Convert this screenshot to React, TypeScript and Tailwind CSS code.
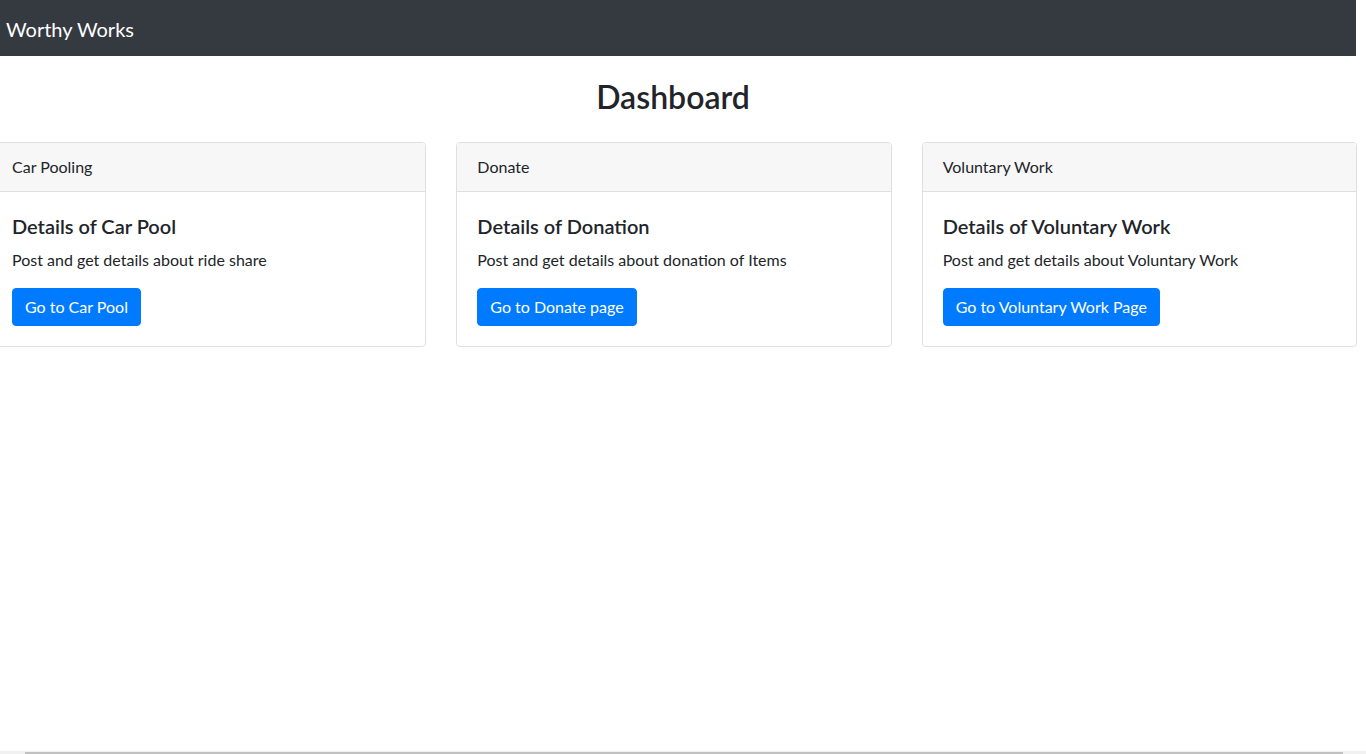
const CARDS = [
  {
    header: 'Car Pooling',
    title: 'Details of Car Pool',
    text: 'Post and get details about ride share',
    button: 'Go to Car Pool',
  },
  {
    header: 'Donate',
    title: 'Details of Donation',
    text: 'Post and get details about donation of Items',
    button: 'Go to Donate page',
  },
  {
    header: 'Voluntary Work',
    title: 'Details of Voluntary Work',
    text: 'Post and get details about Voluntary Work',
    button: 'Go to Voluntary Work Page',
  },
];

export default function App() {
  return (
    <div
      className="relative w-full h-[754px] overflow-hidden bg-white text-[#212529]"
      style={{ fontFamily: '"Segoe UI", Lato, "Noto Sans", sans-serif' }}
    >
      <div className="ml-[-10px] w-[1366px]">
        <nav className="h-14 bg-[#343a40] px-4 pt-[2px] flex items-center">
          <span className="text-white text-xl">Worthy Works</span>
        </nav>

        <h2 className="mt-[22px] text-center text-[32px] leading-[1.2] font-semibold">Dashboard</h2>

        <div className="flex ml-[-14px] w-[1396px] mt-[26px]">
          {CARDS.map((card) => (
            <div key={card.header} className="w-1/3 px-[15px]">
              <div className="border border-[#dfdfdf] rounded-[4px] overflow-hidden">
                <div className="bg-[#f7f7f7] border-b border-[#dfdfdf] px-5 py-3 text-base leading-6">
                  {card.header}
                </div>
                <div className="p-5">
                  <h5 className="text-xl leading-6 font-semibold pt-[2px] mb-[10px]">{card.title}</h5>
                  <p className="text-base leading-6 mb-4">{card.text}</p>
                  <button className="bg-[#007bff] text-white text-base leading-6 px-3 py-[6px] rounded-[4px] border border-[#007bff]">
                    {card.button}
                  </button>
                </div>
              </div>
            </div>
          ))}
        </div>
      </div>

      <div className="absolute bottom-0 left-0 right-0 h-[3px] bg-[#f1f1f1]">
        <div className="ml-[25px] w-[1318px] h-[2px] mt-[1px] bg-[#c1c1c1]" />
      </div>
    </div>
  );
}
